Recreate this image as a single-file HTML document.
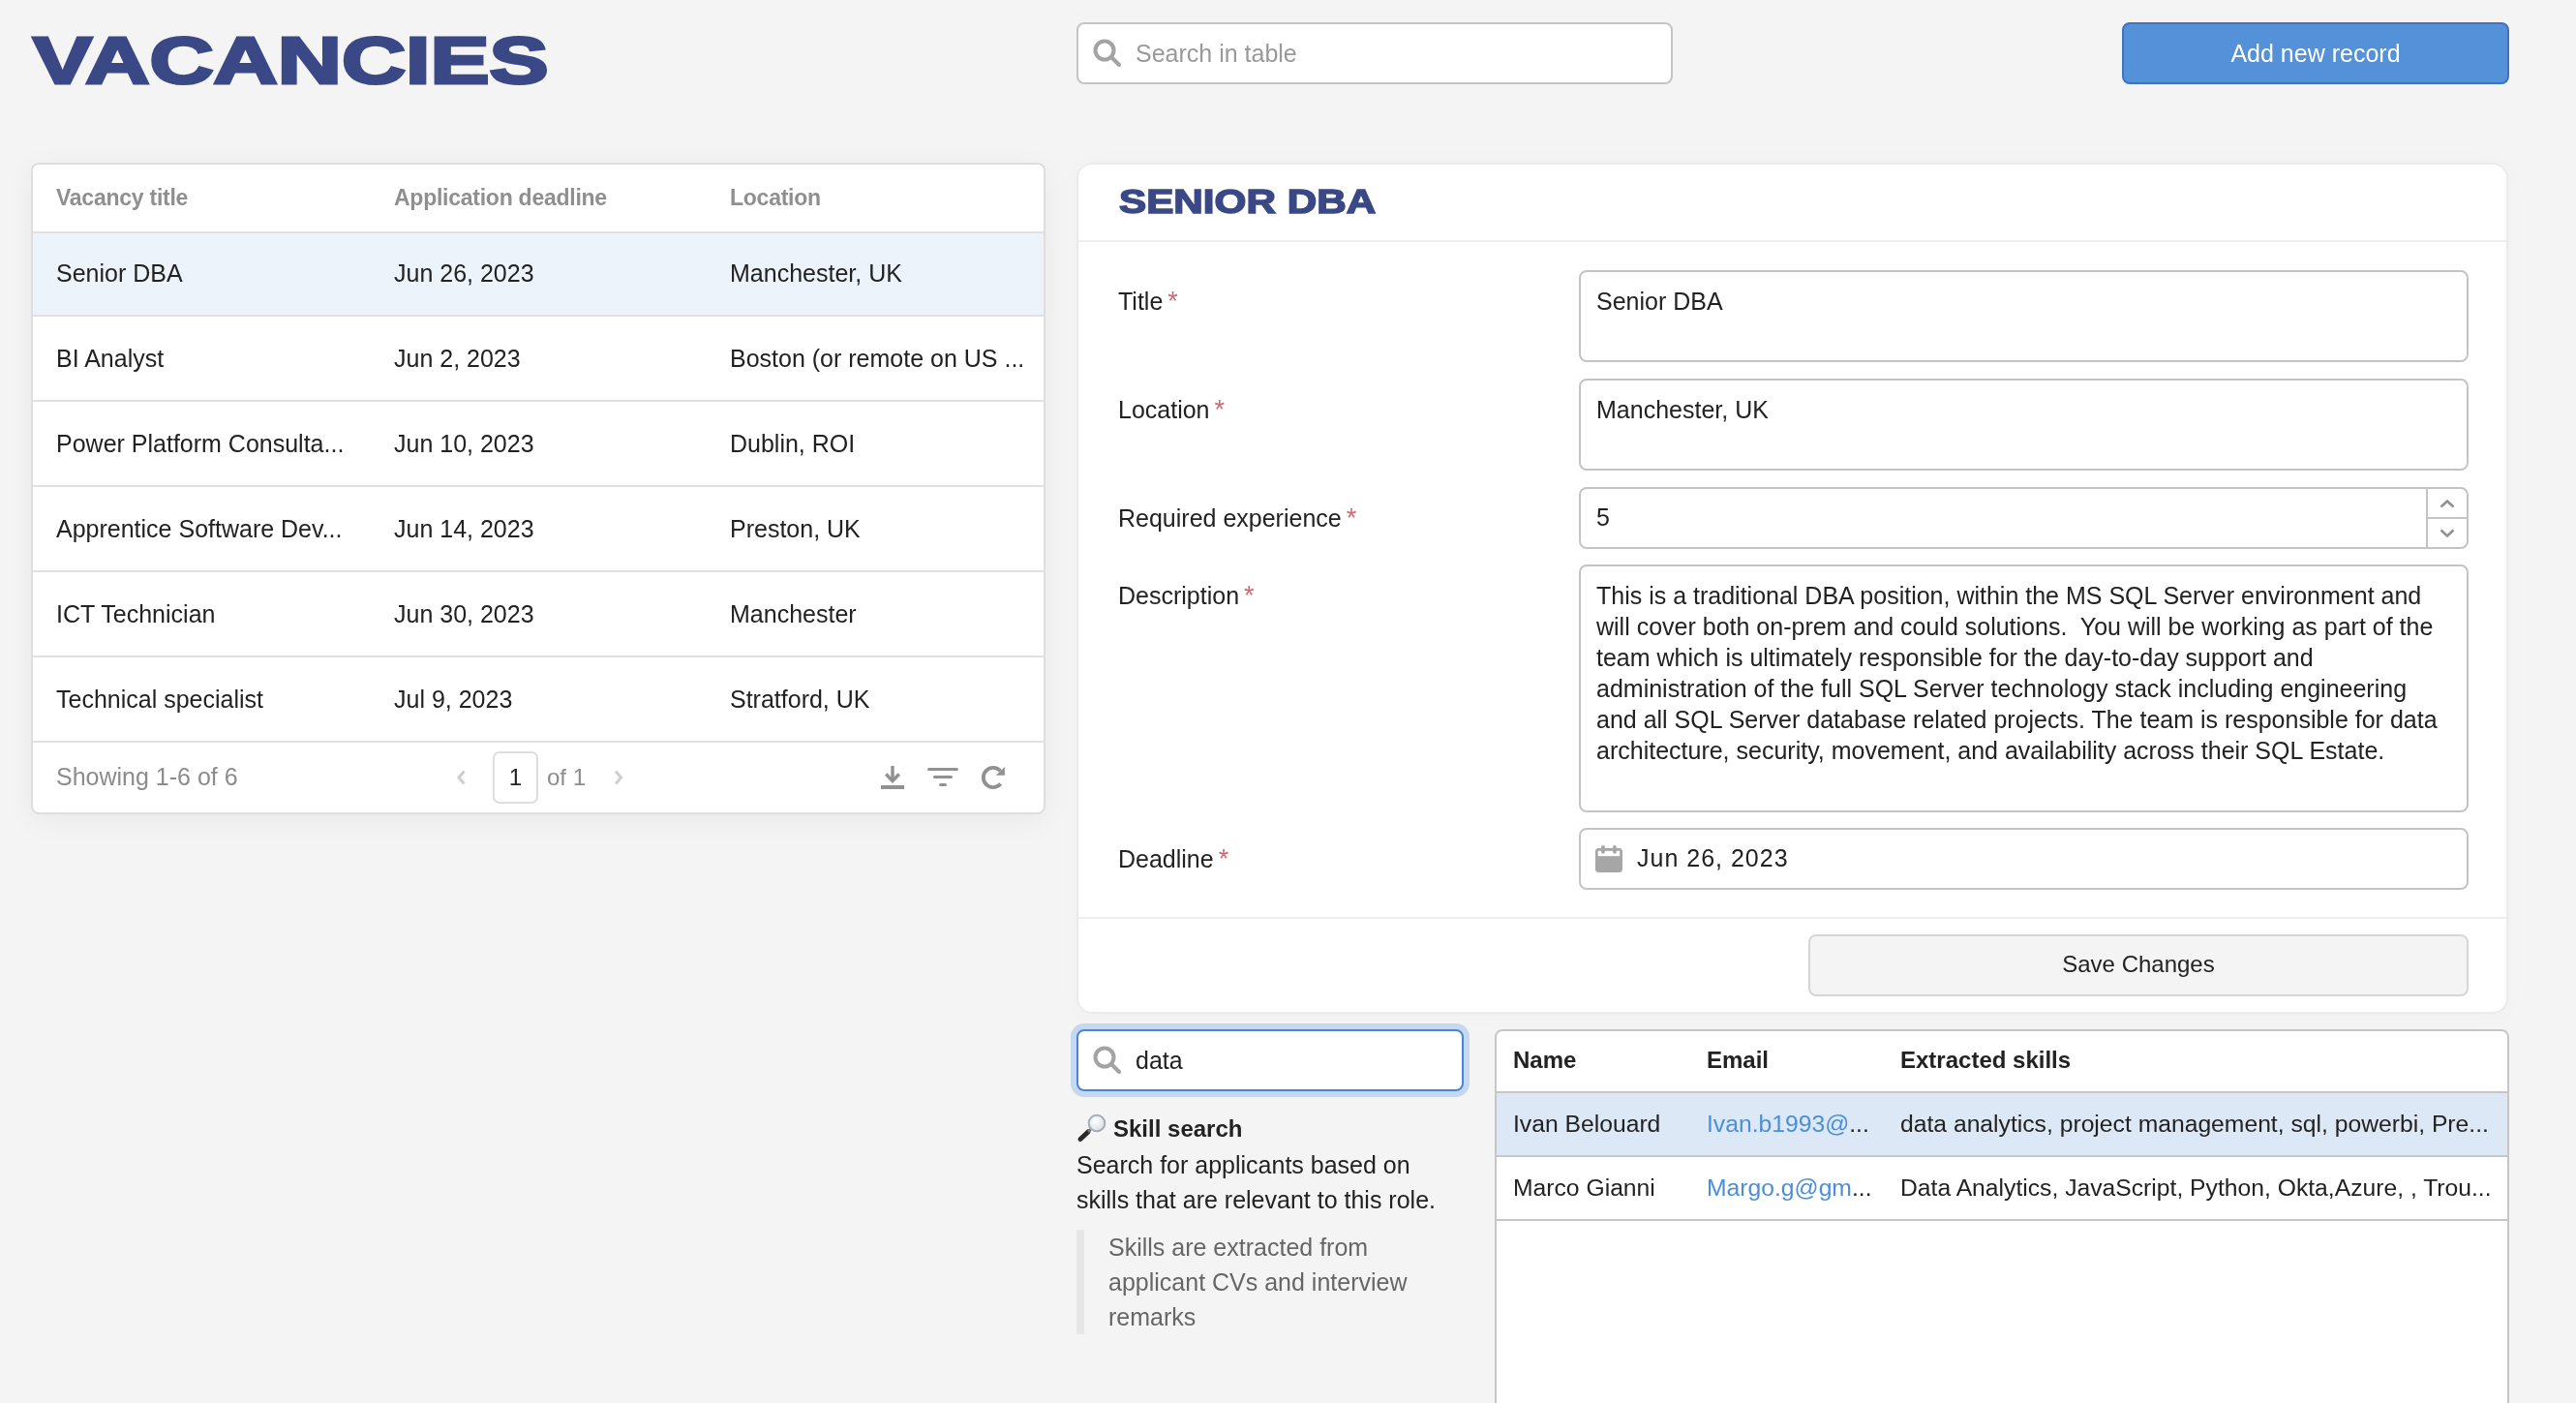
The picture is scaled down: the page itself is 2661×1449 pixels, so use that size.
<!DOCTYPE html>
<html><head><meta charset="utf-8">
<style>
html,body{margin:0;padding:0;}
html{background:#f4f4f4;} body{will-change:transform;width:2661px;height:1449px;overflow:hidden;position:relative;font-family:"Liberation Sans",sans-serif;color:#222;}
.a{position:absolute;}
.t{position:absolute;white-space:pre;line-height:30px;font-size:24px;}
.box{position:absolute;box-sizing:border-box;}
.r{font-size:24.7px;}
.r2{font-size:25px;}
.req{color:#d9656f;font-size:27px;line-height:30px;vertical-align:top;margin-left:5px;}
</style></head><body>

<!-- Title -->
<div class="t" id="vac" style="left:34px;top:27px;font-size:68px;line-height:71px;font-weight:700;color:#3a4986;transform-origin:0 0;transform:scaleX(1.347);-webkit-text-stroke:3px #3a4986;">VACANCIES</div>

<!-- Search in table -->
<div class="box" style="left:1112px;top:23px;width:616px;height:64px;border:2px solid #c4c4c4;border-radius:8px;background:#fff;"></div>
<svg class="a" style="left:1128px;top:39px" width="32" height="32" viewBox="0 0 32 32"><circle cx="13" cy="13" r="9.5" fill="none" stroke="#a3a3a3" stroke-width="4"/><line x1="20" y1="20" x2="28" y2="28" stroke="#a3a3a3" stroke-width="4" stroke-linecap="round"/></svg>
<div class="t" style="left:1173px;top:40px;font-size:25px;color:#999;">Search in table</div>

<!-- Add new record -->
<div class="box" style="left:2192px;top:23px;width:400px;height:64px;border:2px solid #3f73bf;border-radius:8px;background:#5491d8;"></div>
<div class="t" style="left:2192px;top:40px;width:400px;text-align:center;font-size:25px;color:#fff;">Add new record</div>

<!-- Vacancies table card -->
<div class="box" style="left:32px;top:168px;width:1048px;height:673px;border:2px solid #dedede;border-radius:8px;background:#fff;box-shadow:0 6px 30px rgba(0,0,0,0.05);overflow:hidden;">
  <div class="a" style="left:0;top:69px;width:1044px;height:2px;background:#e0e0e0"></div>
  <div class="a" style="left:0;top:71px;width:1044px;height:84px;background:#edf3fa"></div>
  <div class="a" style="left:0;top:155px;width:1044px;height:2px;background:#e0e0e0"></div>
  <div class="a" style="left:0;top:243px;width:1044px;height:2px;background:#e0e0e0"></div>
  <div class="a" style="left:0;top:331px;width:1044px;height:2px;background:#e0e0e0"></div>
  <div class="a" style="left:0;top:419px;width:1044px;height:2px;background:#e0e0e0"></div>
  <div class="a" style="left:0;top:507px;width:1044px;height:2px;background:#e0e0e0"></div>
  <div class="a" style="left:0;top:595px;width:1044px;height:2px;background:#e0e0e0"></div>
</div>
<div class="t" style="left:58px;top:189px;font-size:23px;letter-spacing:-0.25px;font-weight:700;color:#8f8f8f;">Vacancy title</div>
<div class="t" style="left:407px;top:189px;font-size:23px;letter-spacing:-0.25px;font-weight:700;color:#8f8f8f;">Application deadline</div>
<div class="t" style="left:754px;top:189px;font-size:23px;letter-spacing:-0.25px;font-weight:700;color:#8f8f8f;">Location</div>

<div class="t r2" style="left:58px;top:267px;">Senior DBA</div>
<div class="t r2" style="left:407px;top:267px;">Jun 26, 2023</div>
<div class="t r2" style="left:754px;top:267px;">Manchester, UK</div>
<div class="t r2" style="left:58px;top:355px;">BI Analyst</div>
<div class="t r2" style="left:407px;top:355px;">Jun 2, 2023</div>
<div class="t r2" style="left:754px;top:355px;">Boston (or remote on US ...</div>
<div class="t r2" style="left:58px;top:443px;">Power Platform Consulta...</div>
<div class="t r2" style="left:407px;top:443px;">Jun 10, 2023</div>
<div class="t r2" style="left:754px;top:443px;">Dublin, ROI</div>
<div class="t r2" style="left:58px;top:531px;">Apprentice Software Dev...</div>
<div class="t r2" style="left:407px;top:531px;">Jun 14, 2023</div>
<div class="t r2" style="left:754px;top:531px;">Preston, UK</div>
<div class="t r2" style="left:58px;top:619px;">ICT Technician</div>
<div class="t r2" style="left:407px;top:619px;">Jun 30, 2023</div>
<div class="t r2" style="left:754px;top:619px;">Manchester</div>
<div class="t r2" style="left:58px;top:707px;">Technical specialist</div>
<div class="t r2" style="left:407px;top:707px;">Jul 9, 2023</div>
<div class="t r2" style="left:754px;top:707px;">Stratford, UK</div>

<!-- footer -->
<div class="t" style="left:58px;top:787px;font-size:25px;color:#8c8c8c;">Showing 1-6 of 6</div>
<svg class="a" style="left:470px;top:794px" width="14" height="18" viewBox="0 0 14 18"><polyline points="9.5,2.5 4,9 9.5,15.5" fill="none" stroke="#cfcfcf" stroke-width="3"/></svg>
<div class="box" style="left:509px;top:776px;width:47px;height:54px;border:2px solid #dedede;border-radius:7px;background:#fff;"></div>
<div class="t" style="left:509px;top:788px;width:47px;text-align:center;">1</div>
<div class="t" style="left:565px;top:788px;font-size:24px;color:#8c8c8c;">of 1</div>
<svg class="a" style="left:632px;top:794px" width="14" height="18" viewBox="0 0 14 18"><polyline points="4,2.5 9.5,9 4,15.5" fill="none" stroke="#cfcfcf" stroke-width="3"/></svg>
<!-- download -->
<svg class="a" style="left:908px;top:789px" width="28" height="28" viewBox="0 0 28 28"><rect x="12.3" y="2" width="3.4" height="14" fill="#919191"/><polyline points="7.2,10.5 14,17.6 20.8,10.5" fill="none" stroke="#919191" stroke-width="3.4"/><rect x="2" y="22" width="24" height="4" fill="#919191"/></svg>
<!-- filter -->
<svg class="a" style="left:956px;top:789px" width="36" height="26" viewBox="0 0 36 26"><line x1="3.5" y1="5.5" x2="32.5" y2="5.5" stroke="#919191" stroke-width="3" stroke-linecap="round"/><line x1="9.5" y1="13.5" x2="26.5" y2="13.5" stroke="#919191" stroke-width="3" stroke-linecap="round"/><line x1="15.5" y1="21.5" x2="20.5" y2="21.5" stroke="#919191" stroke-width="3" stroke-linecap="round"/></svg>
<!-- refresh -->
<svg class="a" style="left:1012px;top:789px" width="30" height="30" viewBox="0 0 30 30"><path d="M21.6 20.6 A10.1 10.1 0 1 1 21.4 7.2" fill="none" stroke="#919191" stroke-width="3.8"/><polygon points="25.9,3 25.9,11.8 16.8,11.8" fill="#919191"/></svg>

<!-- Form card -->
<div class="box" style="left:1112px;top:168px;width:1479px;height:879px;border:2px solid #ebebeb;border-radius:16px;background:#fff;box-shadow:0 2px 24px rgba(0,0,0,0.025);"></div>
<div class="a" style="left:1114px;top:248px;width:1475px;height:2px;background:#eeeeee"></div>
<div class="a" style="left:1114px;top:947px;width:1475px;height:2px;background:#eeeeee"></div>
<div class="t" id="sdba" style="left:1156px;top:186px;font-size:35.5px;line-height:44px;font-weight:700;color:#3a4986;transform-origin:0 0;transform:scaleX(1.19);-webkit-text-stroke:1.5px #3a4986;">SENIOR DBA</div>

<div class="t" style="left:1155px;top:296px;font-size:25px;">Title<span class="req">*</span></div>
<div class="t" style="left:1155px;top:408px;font-size:25px;">Location<span class="req">*</span></div>
<div class="t" style="left:1155px;top:520px;font-size:25px;">Required experience<span class="req">*</span></div>
<div class="t" style="left:1155px;top:600px;font-size:25px;">Description<span class="req">*</span></div>
<div class="t" style="left:1155px;top:872px;font-size:25px;">Deadline<span class="req">*</span></div>

<div class="box" style="left:1631px;top:279px;width:919px;height:95px;border:2px solid #c4c4c4;border-radius:8px;background:#fff;"></div>
<div class="t" style="left:1649px;top:296px;font-size:25px;">Senior DBA</div>
<div class="box" style="left:1631px;top:391px;width:919px;height:95px;border:2px solid #c4c4c4;border-radius:8px;background:#fff;"></div>
<div class="t" style="left:1649px;top:408px;font-size:25px;">Manchester, UK</div>
<div class="box" style="left:1631px;top:503px;width:919px;height:64px;border:2px solid #c4c4c4;border-radius:8px;background:#fff;"></div>
<div class="a" style="left:2506px;top:505px;width:2px;height:60px;background:#c4c4c4"></div>
<div class="a" style="left:2508px;top:534px;width:40px;height:2px;background:#c4c4c4"></div>
<svg class="a" style="left:2518px;top:512px" width="20" height="16" viewBox="0 0 20 16"><polyline points="3.5,11.5 10,5.5 16.5,11.5" fill="none" stroke="#919191" stroke-width="2.6"/></svg>
<svg class="a" style="left:2518px;top:543px" width="20" height="16" viewBox="0 0 20 16"><polyline points="3.5,4.5 10,10.5 16.5,4.5" fill="none" stroke="#919191" stroke-width="2.6"/></svg>
<div class="t" style="left:1649px;top:519px;font-size:25px;">5</div>

<div class="box" style="left:1631px;top:583px;width:919px;height:256px;border:2px solid #c4c4c4;border-radius:8px;background:#fff;"></div>
<div class="t" style="left:1649px;top:599px;font-size:25px;line-height:32px;">This is a traditional DBA position, within the MS SQL Server environment and
will cover both on-prem and could solutions.  You will be working as part of the
team which is ultimately responsible for the day-to-day support and
administration of the full SQL Server technology stack including engineering
and all SQL Server database related projects. The team is responsible for data
architecture, security, movement, and availability across their SQL Estate.</div>

<div class="box" style="left:1631px;top:855px;width:919px;height:64px;border:2px solid #c4c4c4;border-radius:8px;background:#fff;"></div>
<svg class="a" style="left:1648px;top:872px" width="28" height="30" viewBox="0 0 28 30"><rect x="0" y="4" width="28" height="25" rx="3.5" fill="#a6a6a6"/><rect x="2.7" y="6.8" width="22.5" height="5.4" fill="#fff"/><rect x="6.1" y="0.9" width="3.7" height="8.9" rx="1.8" fill="#a6a6a6"/><rect x="18.1" y="0.9" width="3.7" height="8.9" rx="1.8" fill="#a6a6a6"/></svg>
<div class="t" style="left:1691px;top:871px;font-size:25px;letter-spacing:1px;">Jun 26, 2023</div>

<div class="box" style="left:1868px;top:965px;width:682px;height:64px;border:2px solid #d6d6d6;border-radius:8px;background:#f4f4f4;"></div>
<div class="t" style="left:1868px;top:981px;width:682px;text-align:center;font-size:24px;">Save Changes</div>

<!-- Skill search -->
<div class="box" style="left:1112px;top:1063px;width:400px;height:64px;border:2px solid #4686d6;border-radius:8px;background:#fff;box-shadow:0 0 0 6px #c5d8ed;"></div>
<svg class="a" style="left:1128px;top:1079px" width="32" height="32" viewBox="0 0 32 32"><circle cx="13" cy="13" r="9.5" fill="none" stroke="#a3a3a3" stroke-width="4"/><line x1="20" y1="20" x2="28" y2="28" stroke="#a3a3a3" stroke-width="4" stroke-linecap="round"/></svg>
<div class="t" style="left:1173px;top:1080px;font-size:25px;">data</div>

<svg class="a" style="left:1112px;top:1150px" width="32" height="32" viewBox="0 0 32 32"><defs><radialGradient id="g" cx="0.4" cy="0.35" r="0.7"><stop offset="0" stop-color="#fff"/><stop offset="1" stop-color="#d6dde6"/></radialGradient></defs><line x1="4" y1="26.5" x2="12" y2="19" stroke="#2a2a2a" stroke-width="5" stroke-linecap="round"/><line x1="12" y1="19" x2="15" y2="16" stroke="#777" stroke-width="2.5"/><circle cx="21" cy="10" r="8.3" fill="url(#g)" stroke="#a4acb5" stroke-width="2"/></svg>
<div class="t" style="left:1150px;top:1151px;font-weight:700;">Skill search</div>
<div class="t" style="left:1112px;top:1185px;font-size:25px;line-height:36px;">Search for applicants based on
skills that are relevant to this role.</div>
<div class="a" style="left:1112px;top:1270px;width:8px;height:108px;background:#e6e6e6"></div>
<div class="t" style="left:1145px;top:1270px;font-size:25px;line-height:36px;color:#666;">Skills are extracted from
applicant CVs and interview
remarks</div>

<!-- Applicants table -->
<div class="box" style="left:1544px;top:1063px;width:1048px;height:420px;border:2px solid #c6c6c6;border-radius:8px;background:#fff;overflow:hidden;">
  <div class="a" style="left:0;top:62px;width:1044px;height:2px;background:#c6c6c6"></div>
  <div class="a" style="left:0;top:64px;width:1044px;height:64px;background:#dce8f5"></div>
  <div class="a" style="left:0;top:128px;width:1044px;height:2px;background:#c6c6c6"></div>
  <div class="a" style="left:0;top:194px;width:1044px;height:2px;background:#c6c6c6"></div>
</div>
<div class="t" style="left:1563px;top:1080px;font-weight:700;">Name</div>
<div class="t" style="left:1763px;top:1080px;font-weight:700;">Email</div>
<div class="t" style="left:1963px;top:1080px;font-weight:700;">Extracted skills</div>
<div class="t r" style="left:1563px;top:1146px;">Ivan Belouard</div>
<div class="t r" style="left:1763px;top:1146px;"><span style="color:#4a8fd8">Ivan.b1993@</span>...</div>
<div class="t r" style="left:1963px;top:1146px;">data analytics, project management, sql, powerbi, Pre...</div>
<div class="t r" style="left:1563px;top:1212px;">Marco Gianni</div>
<div class="t r" style="left:1763px;top:1212px;"><span style="color:#4a8fd8">Margo.g@gm</span>...</div>
<div class="t r" style="left:1963px;top:1212px;">Data Analytics, JavaScript, Python, Okta,Azure, , Trou...</div>

</body></html>
